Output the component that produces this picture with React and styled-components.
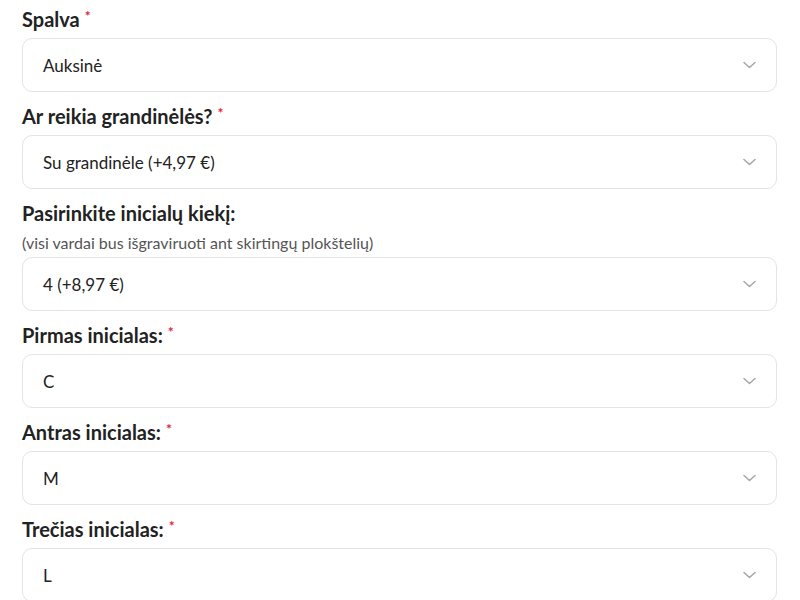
import React from "react";
import styled, { createGlobalStyle } from "styled-components";

const GlobalStyle = createGlobalStyle`
  body {
    margin: 0;
    background: #ffffff;
    font-family: Lato, "Noto Sans", sans-serif;
    color: #222222;
  }
`;

const Form = styled.div`
  padding: 7px 23px 0 22px;
  display: flex;
  flex-direction: column;
  gap: 12px;
`;

const Field = styled.div`
  display: flex;
  flex-direction: column;
`;

const Label = styled.div`
  font-size: 20px;
  font-weight: 700;
  line-height: 24px;
  height: 24px;
  color: #222222;
  margin-bottom: 7px;

  .req {
    color: #e0223a;
    font-size: 14px;
    line-height: 0;
    vertical-align: 6px;
    margin-left: 5px;
  }
`;

const Hint = styled.div`
  font-size: 16px;
  line-height: 20px;
  color: #555555;
  margin-top: 1px;
  margin-bottom: 4px;
`;

const Select = styled.div`
  height: 54px;
  box-sizing: border-box;
  border: 1px solid #e4e4e4;
  border-radius: 10px;
  display: flex;
  align-items: center;
  justify-content: space-between;
  padding: 0 20px;
  font-size: 17px;
  color: #222222;

  svg {
    flex-shrink: 0;
  }
`;

const Chevron = () => (
  <svg width="13" height="8" viewBox="0 0 13 8">
    <polyline
      points="1,1.5 6.5,6.5 12,1.5"
      fill="none"
      stroke="#a6a6a6"
      strokeWidth="1.5"
      strokeLinecap="round"
      strokeLinejoin="round"
    />
  </svg>
);

const fields = [
  { label: "Spalva", required: true, value: "Auksinė" },
  { label: "Ar reikia grandinėlės?", required: true, value: "Su grandinėle (+4,97 €)" },
  {
    label: "Pasirinkite inicialų kiekį:",
    hint: "(visi vardai bus išgraviruoti ant skirtingų plokštelių)",
    value: "4 (+8,97 €)",
  },
  { label: "Pirmas inicialas:", required: true, value: "C" },
  { label: "Antras inicialas:", required: true, value: "M" },
  { label: "Trečias inicialas:", required: true, value: "L" },
];

export default function App() {
  return (
    <>
      <GlobalStyle />
      <Form>
        {fields.map((f) => (
          <Field key={f.label}>
            <Label>
              {f.label}
              {f.required && <span className="req">*</span>}
            </Label>
            {f.hint && <Hint>{f.hint}</Hint>}
            <Select>
              <span>{f.value}</span>
              <Chevron />
            </Select>
          </Field>
        ))}
      </Form>
    </>
  );
}
